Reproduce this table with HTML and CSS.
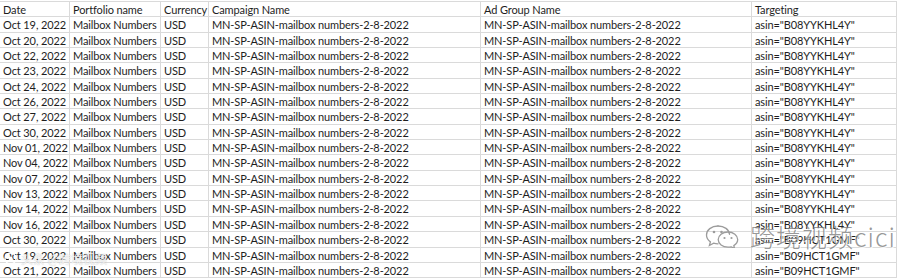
FILE: index.html
```html
<!DOCTYPE html>
<html>
<head>
<meta charset="utf-8">
<link rel="stylesheet" href="styles.css">
</head>
<body>
<div class="page">
  <div class="sheet">
    <div class="c h">Date</div><div class="c h">Portfolio name</div><div class="c h">Currency</div><div class="c h">Campaign Name</div><div class="c h">Ad Group Name</div><div class="c h">Targeting</div>
    <div class="c r">Oct 19, 2022</div><div class="c">Mailbox Numbers</div><div class="c">USD</div><div class="c">MN-SP-ASIN-mailbox numbers-2-8-2022</div><div class="c">MN-SP-ASIN-mailbox numbers-2-8-2022</div><div class="c">asin="B08YYKHL4Y"</div>
    <div class="c r">Oct 20, 2022</div><div class="c">Mailbox Numbers</div><div class="c">USD</div><div class="c">MN-SP-ASIN-mailbox numbers-2-8-2022</div><div class="c">MN-SP-ASIN-mailbox numbers-2-8-2022</div><div class="c">asin="B08YYKHL4Y"</div>
    <div class="c r">Oct 22, 2022</div><div class="c">Mailbox Numbers</div><div class="c">USD</div><div class="c">MN-SP-ASIN-mailbox numbers-2-8-2022</div><div class="c">MN-SP-ASIN-mailbox numbers-2-8-2022</div><div class="c">asin="B08YYKHL4Y"</div>
    <div class="c r">Oct 23, 2022</div><div class="c">Mailbox Numbers</div><div class="c">USD</div><div class="c">MN-SP-ASIN-mailbox numbers-2-8-2022</div><div class="c">MN-SP-ASIN-mailbox numbers-2-8-2022</div><div class="c">asin="B08YYKHL4Y"</div>
    <div class="c r">Oct 24, 2022</div><div class="c">Mailbox Numbers</div><div class="c">USD</div><div class="c">MN-SP-ASIN-mailbox numbers-2-8-2022</div><div class="c">MN-SP-ASIN-mailbox numbers-2-8-2022</div><div class="c">asin="B08YYKHL4Y"</div>
    <div class="c r">Oct 26, 2022</div><div class="c">Mailbox Numbers</div><div class="c">USD</div><div class="c">MN-SP-ASIN-mailbox numbers-2-8-2022</div><div class="c">MN-SP-ASIN-mailbox numbers-2-8-2022</div><div class="c">asin="B08YYKHL4Y"</div>
    <div class="c r">Oct 27, 2022</div><div class="c">Mailbox Numbers</div><div class="c">USD</div><div class="c">MN-SP-ASIN-mailbox numbers-2-8-2022</div><div class="c">MN-SP-ASIN-mailbox numbers-2-8-2022</div><div class="c">asin="B08YYKHL4Y"</div>
    <div class="c r">Oct 30, 2022</div><div class="c">Mailbox Numbers</div><div class="c">USD</div><div class="c">MN-SP-ASIN-mailbox numbers-2-8-2022</div><div class="c">MN-SP-ASIN-mailbox numbers-2-8-2022</div><div class="c">asin="B08YYKHL4Y"</div>
    <div class="c r">Nov 01, 2022</div><div class="c">Mailbox Numbers</div><div class="c">USD</div><div class="c">MN-SP-ASIN-mailbox numbers-2-8-2022</div><div class="c">MN-SP-ASIN-mailbox numbers-2-8-2022</div><div class="c">asin="B08YYKHL4Y"</div>
    <div class="c r">Nov 04, 2022</div><div class="c">Mailbox Numbers</div><div class="c">USD</div><div class="c">MN-SP-ASIN-mailbox numbers-2-8-2022</div><div class="c">MN-SP-ASIN-mailbox numbers-2-8-2022</div><div class="c">asin="B08YYKHL4Y"</div>
    <div class="c r">Nov 07, 2022</div><div class="c">Mailbox Numbers</div><div class="c">USD</div><div class="c">MN-SP-ASIN-mailbox numbers-2-8-2022</div><div class="c">MN-SP-ASIN-mailbox numbers-2-8-2022</div><div class="c">asin="B08YYKHL4Y"</div>
    <div class="c r">Nov 13, 2022</div><div class="c">Mailbox Numbers</div><div class="c">USD</div><div class="c">MN-SP-ASIN-mailbox numbers-2-8-2022</div><div class="c">MN-SP-ASIN-mailbox numbers-2-8-2022</div><div class="c">asin="B08YYKHL4Y"</div>
    <div class="c r">Nov 14, 2022</div><div class="c">Mailbox Numbers</div><div class="c">USD</div><div class="c">MN-SP-ASIN-mailbox numbers-2-8-2022</div><div class="c">MN-SP-ASIN-mailbox numbers-2-8-2022</div><div class="c">asin="B08YYKHL4Y"</div>
    <div class="c r">Nov 16, 2022</div><div class="c">Mailbox Numbers</div><div class="c">USD</div><div class="c">MN-SP-ASIN-mailbox numbers-2-8-2022</div><div class="c">MN-SP-ASIN-mailbox numbers-2-8-2022</div><div class="c">asin="B08YYKHL4Y"</div>
    <div class="c r">Oct 30, 2022</div><div class="c">Mailbox Numbers</div><div class="c">USD</div><div class="c">MN-SP-ASIN-mailbox numbers-2-8-2022</div><div class="c">MN-SP-ASIN-mailbox numbers-2-8-2022</div><div class="c">asin="B09HCT1GMF"</div>
    <div class="c r">Oct 19, 2022</div><div class="c">Mailbox Numbers</div><div class="c">USD</div><div class="c">MN-SP-ASIN-mailbox numbers-2-8-2022</div><div class="c">MN-SP-ASIN-mailbox numbers-2-8-2022</div><div class="c">asin="B09HCT1GMF"</div>
    <div class="c r">Oct 21, 2022</div><div class="c">Mailbox Numbers</div><div class="c">USD</div><div class="c">MN-SP-ASIN-mailbox numbers-2-8-2022</div><div class="c">MN-SP-ASIN-mailbox numbers-2-8-2022</div><div class="c">asin="B09HCT1GMF"</div>
  </div>

  <div class="wm-left">
    <svg class="wm-left-icon" width="13" height="13" viewBox="0 0 13 13"><circle cx="6.5" cy="6.5" r="5.5" fill="none" stroke="#fff" stroke-width="1.3"/><circle cx="6.5" cy="6.5" r="2" fill="#fff"/></svg>
    <span>头条 @跨境视频</span>
  </div>

  <div class="wm-right">
    <svg class="wechat" width="36" height="24" viewBox="0 0 36 24">
      <path d="M14 2C7.4 2 2.5 6 2.5 11c0 2.8 1.5 5.2 3.9 6.9L5.4 21.5l4.2-2.3c1.4.4 2.9.6 4.4.6" fill="none" stroke="#9c9c9c" stroke-width="1.3" stroke-linecap="round"/>
      <path d="M14 2c6.3 0 11.2 3.6 11.5 8.3" fill="none" stroke="#9c9c9c" stroke-width="1.3" stroke-linecap="round"/>
      <circle cx="10" cy="8" r="1.3" fill="#9c9c9c"/>
      <circle cx="17.5" cy="8" r="1.3" fill="#9c9c9c"/>
      <path d="M24 11c-5.5 0-9.8 3.4-9.8 7.6 0 4.2 4.3 7.6 9.8 7.6 1.1 0 2.200-.1 3.2-.4l3.4 1.8-.8-3c2.3-1.4 3.9-3.6 3.9-6 0-4.2-4.3-7.6-9.7-7.6z" transform="translate(0 -3)" fill="none" stroke="#9c9c9c" stroke-width="1.3" stroke-linejoin="round"/>
      <circle cx="20.5" cy="14" r="1.1" fill="#9c9c9c"/>
      <circle cx="27.5" cy="14" r="1.1" fill="#9c9c9c"/>
    </svg>
    <span class="wm-text">跨境视频cici</span>
  </div>
</div>
</body>
</html>
```

FILE: styles.css
```css
html, body {
  margin: 0;
  padding: 0;
  background: #ffffff;
}

.page {
  position: relative;
  width: 900px;
  height: 279px;
  overflow: hidden;
}

.sheet {
  margin-top: 1px;
  border-top: 1px solid #dadada;
  display: grid;
  grid-template-columns: 70px 91px 48px 272px 271px 145px;
  grid-auto-rows: 15.35px;
  width: 897px;
  font-family: Lato, "Liberation Sans", sans-serif;
  font-size: 11px;
  letter-spacing: -0.12px;
  color: #1e1e1e;
}

.c {
  box-sizing: border-box;
  border-right: 1px solid #dadada;
  border-bottom: 1px solid #dadada;
  padding: 1px 3px 0 3px;
  line-height: 14px;
  white-space: nowrap;
  overflow: hidden;
}

.r {
  text-align: right;
}

.wm-left {
  position: absolute;
  left: 4px;
  top: 250px;
  display: flex;
  align-items: center;
  gap: 4px;
  font-family: "Noto Sans CJK SC", sans-serif;
  font-size: 12px;
  color: rgba(255, 255, 255, 0.85);
  text-shadow: 0 0 1px rgba(120, 120, 120, 0.5);
}

.wm-right {
  position: absolute;
  left: 704px;
  top: 223px;
  display: flex;
  align-items: center;
  gap: 10px;
}

.wm-text {
  font-family: "Noto Sans CJK SC", sans-serif;
  font-size: 25px;
  line-height: 26px;
  letter-spacing: 1px;
  color: rgba(125, 125, 125, 0.8);
  font-weight: 300;
  text-shadow: 1px 1px 0 rgba(255, 255, 255, 0.8);
}
```
